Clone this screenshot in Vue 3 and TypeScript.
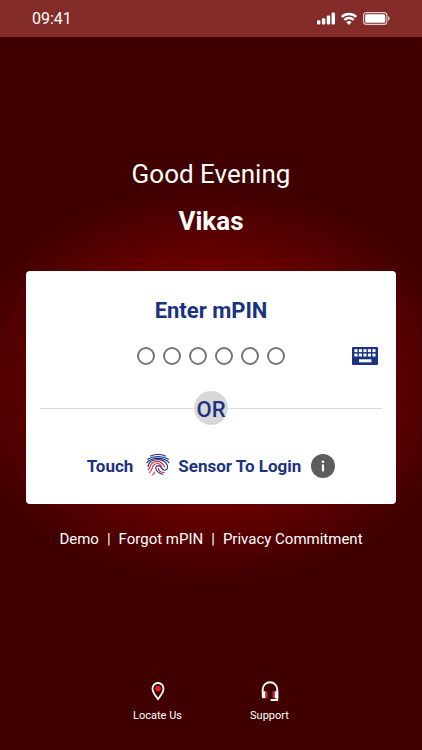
<script setup lang="ts">
import { ref } from 'vue'

const userName = 'Vikas'
const pin = ref<string[]>(['', '', '', '', '', ''])
const links: string[] = ['Demo', 'Forgot mPIN', 'Privacy Commitment']
const keyColumns: number[] = [2.4, 6.9, 11.4, 15.9, 20.4]
</script>

<template>
  <div class="screen">
    <header class="status">
      <time class="clock">09:41</time>
      <div class="indicators">
        <svg width="18" height="13" viewBox="0 0 18 13" fill="#fff" aria-hidden="true">
          <rect x="0" y="8.3" width="3.4" height="4.2" rx="1" />
          <rect x="4.9" y="6.3" width="3.4" height="6.2" rx="1" />
          <rect x="9.8" y="3.6" width="3.4" height="8.9" rx="1" />
          <rect x="14.6" y="0.6" width="3.4" height="11.9" rx="1" />
        </svg>
        <svg width="16" height="13" viewBox="0 0 16 13" fill="none" stroke="#fff" stroke-width="2.4" aria-hidden="true">
          <path d="M0.7 5a10.4 10.4 0 0 1 14.6 0M3.3 8a6.6 6.6 0 0 1 9.4 0" />
          <path d="M5.4 10.2a3.7 3.7 0 0 1 5.2 0L8 12.9z" fill="#fff" stroke="none" />
        </svg>
        <svg width="27" height="13" viewBox="0 0 27 13" aria-hidden="true">
          <rect x="0.6" y="0.6" width="23.3" height="11.8" rx="3" fill="none" stroke="#e4cccc" stroke-width="1.1" />
          <rect x="2.2" y="2.2" width="20.1" height="8.6" rx="1.6" fill="#fff" />
          <path d="M25 4.3c2.2.7 2.2 3.7 0 4.4z" fill="#e4cccc" />
        </svg>
      </div>
    </header>

    <main class="content">
      <h1 class="greeting">Good Evening <strong>{{ userName }}</strong></h1>

      <form class="card" @submit.prevent>
        <h2 id="pin-title" class="title">Enter mPIN</h2>
        <div class="pin-row">
          <div class="pins" role="group" aria-labelledby="pin-title">
            <input
              v-for="(_, i) in pin"
              :key="i"
              v-model="pin[i]"
              class="pin"
              type="password"
              inputmode="numeric"
              maxlength="1"
              :aria-label="`Digit ${i + 1}`"
            />
          </div>
          <button class="icon-button keyboard" type="button" aria-label="Keyboard">
            <svg width="26" height="18" viewBox="0 0 26 18">
              <rect width="26" height="18" rx="1" fill="#1b3281" />
              <g fill="#fff">
                <rect v-for="x in keyColumns" :key="`a${x}`" :x="x" y="2.2" width="3.1" height="2.9" />
                <rect v-for="x in keyColumns" :key="`b${x}`" :x="x" y="6.6" width="3.1" height="2.9" />
                <rect x="7" y="12.3" width="12.4" height="3" />
              </g>
            </svg>
          </button>
        </div>

        <div class="divider"><span class="or">OR</span></div>

        <div class="touch">
          <button class="touch-button" type="button">
            <span>Touch</span>
            <svg class="finger" width="24" height="24" viewBox="0 1 24 24" fill="none" stroke-width="1.15" stroke-linecap="round" aria-hidden="true">
              <g stroke="#1b3281">
                <path d="M4.6 3C9 1.2 15 1.2 19.4 3" />
                <path d="M1.6 6.2C7.2 2.8 16.8 2.8 22.4 6.2" />
                <path d="M1 9.7C5.6 3.9 18.4 3.9 23 9.7" />
                <path d="M2.2 13.6C2.8 5.2 17 4.4 21 11.6C22.6 15.4 20.8 17.2 18.8 17.2C15 17.2 16 12.8 12.4 12.6C8 12.8 9 19.6 17 21.2" />
              </g>
              <g stroke="#e42c43">
                <path d="M2.2 16.8C4.4 15.2 3.4 12.8 6 10.2C9.6 7 16.4 8 18.6 14" />
                <path d="M3.4 19.6C7 17.4 5 14.6 7.8 12C10.8 9.2 15.2 10.8 15.8 14.2" />
                <path d="M6.2 22C8 21.2 8.6 20.2 8.6 19M12.3 15.4C12.8 18 15 19.5 18.4 19.5" />
              </g>
            </svg>
            <span>Sensor To Login</span>
          </button>
          <button class="icon-button" type="button" aria-label="Information">
            <svg width="24" height="24" viewBox="0 0 24 24">
              <circle cx="12" cy="12" r="12" fill="#5d5d5d" />
              <circle cx="12" cy="7.7" r="1.3" fill="#fff" />
              <rect x="10.9" y="10.4" width="2.2" height="7" fill="#fff" />
            </svg>
          </button>
        </div>
      </form>

      <nav class="links">
        <template v-for="(link, i) in links" :key="link">
          <span v-if="i > 0">|</span>
          <a href="#">{{ link }}</a>
        </template>
      </nav>
    </main>

    <footer class="footer">
      <a class="action" href="#">
        <svg width="20" height="20" viewBox="0 0 20 20" aria-hidden="true">
          <path d="M10 2A5.5 5.5 0 0 0 4.5 7.6C4.5 11.5 10 18.1 10 18.1S15.5 11.5 15.5 7.6A5.5 5.5 0 0 0 10 2z" fill="none" stroke="#fff" stroke-width="1.8" />
          <circle cx="10" cy="7.6" r="2.8" fill="#ed1c24" />
        </svg>
        <span>Locate Us</span>
      </a>
      <a class="action" href="#">
        <svg width="20" height="20" viewBox="0 0 20 20" fill="none" aria-hidden="true">
          <path d="M6.3 10.2v7M13.7 10.2v7" stroke="#d9232e" stroke-width="2.2" />
          <path d="M2.7 11V8.6a7.3 7.3 0 0 1 14.6 0V19H10.6" stroke="#fff" stroke-width="1.9" stroke-linejoin="round" />
          <path d="M1.8 10.2H5.2v7H3.3q-1.5 0-1.5-1.5zM14.8 10.2h3.4v7h-3.4z" fill="#fff" />
        </svg>
        <span>Support</span>
      </a>
    </footer>
  </div>
</template>

<style>
body {
  margin: 0;
  background: #400000;
}
</style>

<style scoped>
.screen {
  box-sizing: border-box;
  min-height: 100vh;
  display: flex;
  flex-direction: column;
  font-family: Roboto, "Liberation Sans", sans-serif;
  color: #fff;
  background: radial-gradient(ellipse 256px 200px at 50% 384px, #9c0000 0%, #6c0000 56%, #400000 100%) #400000;
}

.status {
  box-sizing: border-box;
  height: 37px;
  padding: 0 32px;
  display: flex;
  align-items: center;
  justify-content: space-between;
  background: #832c2a;
}

.clock {
  font-size: 16px;
  line-height: 20px;
}

.indicators {
  display: flex;
  gap: 6px;
}

.content {
  padding: 121px 26px 0;
}

.greeting {
  margin: 0;
  font-size: 26px;
  line-height: 32px;
  font-weight: 400;
  text-align: center;
}

.greeting strong {
  display: block;
  margin-top: 15px;
  font-weight: 700;
}

.card {
  margin-top: 34px;
  padding: 25px 14px 26px;
  border-radius: 4px;
  background: #fff;
  color: #1b3281;
}

.title {
  margin: 0;
  font-size: 22px;
  line-height: 30px;
  font-weight: 700;
  text-align: center;
}

.pin-row {
  display: grid;
  grid-template-columns: 1fr auto 1fr;
  align-items: center;
  margin-top: 21px;
  padding-right: 4px;
  padding-left: 4px;
}

.pins {
  grid-column: 2;
  display: flex;
  gap: 8px;
}

.pin {
  box-sizing: border-box;
  width: 18px;
  height: 18px;
  padding: 0;
  border: 2px solid #777;
  border-radius: 50%;
  background: #fff;
  text-align: center;
}

.icon-button {
  display: flex;
  padding: 0;
  border: 0;
  background: none;
}

.keyboard {
  justify-self: end;
}

.divider {
  display: flex;
  align-items: center;
  margin-top: 26px;
}

.divider::before,
.divider::after {
  content: "";
  flex: 1;
  height: 1px;
  background: #dcdcdc;
}

.or {
  width: 34px;
  height: 34px;
  border-radius: 50%;
  background: #d8d8d8;
  font-size: 22px;
  line-height: 37px;
  font-weight: 500;
  text-align: center;
}

.touch {
  display: flex;
  align-items: center;
  justify-content: center;
  gap: 10px;
  margin-top: 29px;
}

.touch-button {
  display: flex;
  align-items: center;
  padding: 0;
  border: 0;
  background: none;
  color: inherit;
  font-family: inherit;
  font-size: 17px;
  line-height: 24px;
  font-weight: 700;
}

.finger {
  margin: 0 8px 0 13px;
}

.links {
  display: flex;
  justify-content: center;
  gap: 8px;
  margin-top: 25px;
  font-size: 15px;
  line-height: 20px;
}

a {
  color: inherit;
  text-decoration: none;
}

.footer {
  display: flex;
  justify-content: center;
  gap: 40px;
  margin-top: auto;
  padding: 0 0 26px 5px;
}

.action {
  width: 72px;
  display: flex;
  flex-direction: column;
  align-items: center;
  gap: 7px;
  font-size: 11px;
  line-height: 16px;
}
</style>
